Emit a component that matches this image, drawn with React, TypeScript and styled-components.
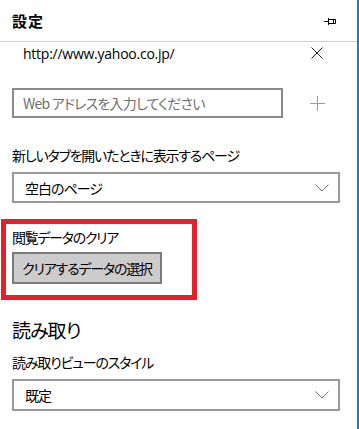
import React from 'react';
import styled, { createGlobalStyle } from 'styled-components';

const GlobalStyle = createGlobalStyle`
  html, body {
    margin: 0;
    padding: 0;
    background: #fff;
  }
  body {
    font-family: "Noto Sans CJK JP", "Noto Sans", sans-serif;
    font-feature-settings: "palt";
    color: #000;
  }
`;

const Pane = styled.div`
  width: 359px;
  height: 429px;
  box-sizing: border-box;
  border-right: 2px solid #1979d3;
  background: #fff;
  overflow: hidden;
  display: flex;
  flex-direction: column;
`;

const Header = styled.div`
  height: 41px;
  flex-shrink: 0;
  border-bottom: 1px solid #cccccc;
  display: flex;
  align-items: center;
  justify-content: space-between;
  padding: 0 20px 0 12px;
`;

const Title = styled.h1`
  margin: 0;
  font-size: 15px;
  font-weight: 700;
  letter-spacing: 1px;
`;

const UrlRow = styled.div`
  height: 22px;
  flex-shrink: 0;
  display: flex;
  align-items: center;
  justify-content: space-between;
  padding: 0 25px 0 23px;
`;

const UrlText = styled.span`
  font-family: "Open Sans", "Noto Sans", sans-serif;
  font-size: 14px;
  letter-spacing: -0.25px;
`;

const IconBox = styled.div`
  width: 30px;
  display: flex;
  align-items: center;
  justify-content: center;
`;

const AddRow = styled.div`
  margin-top: 24px;
  height: 30px;
  flex-shrink: 0;
  display: flex;
  align-items: center;
  gap: 19px;
  padding-left: 12px;
`;

const AddressInput = styled.input`
  width: 271px;
  height: 30px;
  box-sizing: border-box;
  border: 2px solid #8a8a8a;
  padding: 0 9px;
  font-family: "Noto Sans CJK JP", sans-serif;
  font-feature-settings: "palt";
  font-size: 14px;
  letter-spacing: -0.8px;
  outline: none;
  &::placeholder {
    color: #6f6f6f;
  }
`;

const Label = styled.div<{ $top: number }>`
  margin-top: ${p => p.$top}px;
  margin-left: 12px;
  font-size: 14px;
  letter-spacing: -1.2px;
  line-height: 20px;
  height: 20px;
  white-space: nowrap;
`;

const Select = styled.div<{ $top: number; $height: number }>`
  margin: ${p => p.$top}px 0 0 12px;
  width: 328px;
  height: ${p => p.$height}px;
  flex-shrink: 0;
  box-sizing: border-box;
  border: 2px solid #999999;
  display: flex;
  align-items: center;
  justify-content: space-between;
  padding: 0 9px 0 11px;
  font-size: 14px;
  letter-spacing: -1px;
`;

const Highlight = styled.section`
  margin: 16px 0 0 1px;
  width: 196px;
  height: 81px;
  flex-shrink: 0;
  box-sizing: border-box;
  border: 5px solid #e3202b;
  padding: 3px 0 0 6px;
  display: flex;
  flex-direction: column;
`;

const SectionLabel = styled.div`
  font-size: 14px;
  letter-spacing: -1.3px;
  line-height: 20px;
  white-space: nowrap;
`;

const ClearButton = styled.button`
  margin-top: 5px;
  width: 150px;
  height: 32px;
  box-sizing: border-box;
  border: 2px solid #7a7a7a;
  background: #cccccc;
  font-family: "Noto Sans CJK JP", sans-serif;
  font-feature-settings: "palt";
  font-size: 14px;
  letter-spacing: -1.2px;
  color: #000;
  padding: 0;
`;

const Heading = styled.h2`
  margin: 16px 0 0 12px;
  font-size: 19px;
  letter-spacing: -1px;
  font-weight: 400;
  line-height: 28px;
`;

const PinIcon = () => (
  <svg width="13" height="10" viewBox="0 0 13 10" fill="none" stroke="#000" strokeWidth="1">
    <path d="M0 5.5H4.5M4.5 2V9M4.5 3.5H11.5V7.5H4.5M9.5 3.5V7.5" />
  </svg>
);

const CloseIcon = () => (
  <svg width="12" height="12" viewBox="0 0 12 12" stroke="#222" strokeWidth="1">
    <path d="M0.5 0.5L11.5 11.5M11.5 0.5L0.5 11.5" />
  </svg>
);

const PlusIcon = () => (
  <svg width="15" height="15" viewBox="0 0 15 15" stroke="#9a9a9a" strokeWidth="1">
    <path d="M7.5 0V15M0 7.5H15" />
  </svg>
);

const Chevron = () => (
  <svg width="14" height="8" viewBox="0 0 14 8" fill="none" stroke="#7a7a7a" strokeWidth="1">
    <path d="M0.5 0.5L7 7L13.5 0.5" />
  </svg>
);

const App: React.FC = () => {
  return (
    <>
      <GlobalStyle />
      <Pane>
        <Header>
          <Title>設定</Title>
          <PinIcon />
        </Header>

        <UrlRow>
          <UrlText>http://www.yahoo.co.jp/</UrlText>
          <IconBox>
            <CloseIcon />
          </IconBox>
        </UrlRow>

        <AddRow>
          <AddressInput placeholder="Web アドレスを入力してください" />
          <IconBox>
            <PlusIcon />
          </IconBox>
        </AddRow>

        <Label $top={27}>新しいタブを開いたときに表示するページ</Label>
        <Select $top={7} $height={31}>
          <span>空白のページ</span>
          <Chevron />
        </Select>

        <Highlight>
          <SectionLabel>閲覧データのクリア</SectionLabel>
          <ClearButton>クリアするデータの選択</ClearButton>
        </Highlight>

        <Heading>読み取り</Heading>
        <Label $top={8}>読み取りビューのスタイル</Label>
        <Select $top={7} $height={32}>
          <span>既定</span>
          <Chevron />
        </Select>
      </Pane>
    </>
  );
};

export default App;
